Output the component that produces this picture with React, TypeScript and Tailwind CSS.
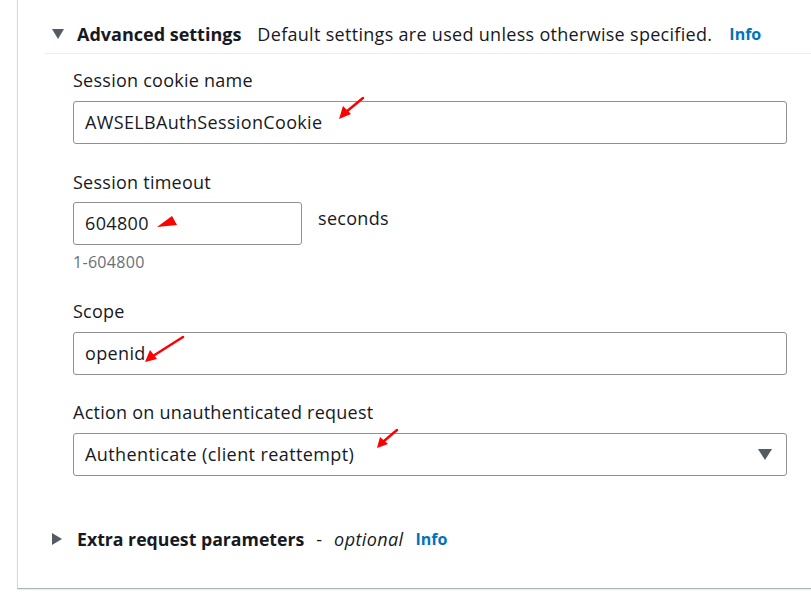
import React from "react";

const font = { fontFamily: '"Open Sans", "Noto Sans", sans-serif' };

function Label({ children }: { children: React.ReactNode }) {
  return <div className="text-[18px] tracking-[0.25px] leading-[24px] text-[#16191f]">{children}</div>;
}

function Input({ value, className }: { value: string; className?: string }) {
  return (
    <div
      className={
        "h-[43px] border border-[#8d9096] rounded-[3px] flex items-center px-[11px] text-[18px] tracking-[0.35px] text-[#16191f] bg-white " +
        (className ?? "")
      }
    >
      {value}
    </div>
  );
}

export default function App() {
  return (
    <div className="w-[811px] h-[602px] bg-white relative overflow-hidden" style={font}>
      <div className="ml-[17px] h-[589px] border-l border-b border-l-[#d5dbdb] border-b-[#aab7b8] shadow-[0_1px_1px_rgba(0,0,0,0.08)]">
        {/* header */}
        <div className="ml-[27px] border-b border-[#eaeded] pt-[22px] pb-[7px]">
          <div className="flex items-center h-[24px] pl-[7px]">
            <svg width="12" height="10" viewBox="0 0 12 10" className="mr-[13px]">
              <polygon points="0,0 12,0 6,10" fill="#545b64" />
            </svg>
            <span className="text-[18px] font-bold text-[#16191f]">Advanced settings</span>
            <span className="ml-[16px] text-[18px] tracking-[0.3px] text-[#16191f]">
              Default settings are used unless otherwise specified.
            </span>
            <span className="ml-[17px] text-[16px] font-bold text-[#0073bb]">Info</span>
          </div>
        </div>

        {/* fields */}
        <div className="ml-[55px] w-[714px]">
          <div className="mt-[14px]">
            <Label>Session cookie name</Label>
            <Input value="AWSELBAuthSessionCookie" className="mt-[9px]" />
          </div>

          <div className="mt-[26px]">
            <Label>Session timeout</Label>
            <div className="mt-[8px] flex items-start">
              <Input value="604800" className="w-[229px]" />
              <span className="ml-[16px] mt-[4px] text-[18px] tracking-[0.3px] leading-[24px] text-[#16191f]">seconds</span>
            </div>
            <div className="mt-[7px] text-[16px] tracking-[0.3px] leading-[20px] text-[#687078]">1-604800</div>
          </div>

          <div className="mt-[27px]">
            <Label>Scope</Label>
            <Input value="openid" className="mt-[9px]" />
          </div>

          <div className="mt-[25px]">
            <Label>Action on unauthenticated request</Label>
            <div className="mt-[9px] h-[43px] border border-[#8d9096] rounded-[3px] flex items-center justify-between pl-[11px] pr-[14px] text-[18px] tracking-[0.4px] text-[#16191f]">
              <span>Authenticate (client reattempt)</span>
              <svg width="14" height="11" viewBox="0 0 14 11">
                <polygon points="0,0 14,0 7,11" fill="#545b64" />
              </svg>
            </div>
          </div>
        </div>

        {/* extra request */}
        <div className="ml-[34px] mt-[51px] flex items-center h-[24px]">
          <svg width="10" height="12" viewBox="0 0 10 12" className="mr-[15px]">
            <polygon points="0,0 10,6 0,12" fill="#545b64" />
          </svg>
          <span className="text-[17.7px] font-bold text-[#16191f]">Extra request parameters</span>
          <span className="ml-[12px] text-[18px] text-[#16191f]">-</span>
          <span className="ml-[12px] text-[18px] tracking-[0.4px] italic text-[#16191f]">optional</span>
          <span className="ml-[12px] text-[16px] font-bold text-[#0073bb]">Info</span>
        </div>
      </div>

      {/* red annotation arrows */}
      <svg className="absolute left-0 top-0 pointer-events-none" width="811" height="602">
        <g stroke="#ff0000" strokeWidth="2.5" strokeLinecap="round" fill="#ff0000">
          <line x1="363" y1="98" x2="346" y2="112" />
          <polygon points="339,119 343,106 351,114" stroke="none" />
          <polygon points="157,227 172,216 177,225" stroke="none" />
          <line x1="183" y1="337" x2="153" y2="356" />
          <polygon points="145,362 150,350 157,359" stroke="none" />
          <line x1="397" y1="430" x2="384" y2="441" />
          <polygon points="377,448 380,437 388,444" stroke="none" />
        </g>
      </svg>
    </div>
  );
}
